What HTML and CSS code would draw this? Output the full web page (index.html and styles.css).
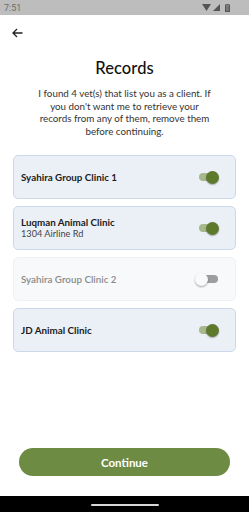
FILE: index.html
```html
<!DOCTYPE html>
<html>
<head>
<meta charset="utf-8">
<link rel="stylesheet" href="styles.css">
</head>
<body>
<div class="screen">
  <div class="status">
    <span class="time">7:51</span>
    <div class="status-icons">
      <svg width="9" height="7" viewBox="0 0 9 7"><path d="M0 0 H9 L4.5 7 Z" fill="#555"/></svg>
      <svg width="7" height="7" viewBox="0 0 7 7"><path d="M0 7 L7 0 V7 Z" fill="#555"/></svg>
      <svg width="5" height="8" viewBox="0 0 5 8"><rect x="0.5" y="1" width="4" height="6.5" fill="none" stroke="#555" stroke-width="1"/><rect x="1.5" y="0" width="2" height="1" fill="#555"/><rect x="1" y="2" width="3" height="5" fill="#777"/></svg>
    </div>
  </div>
  <div class="topbar">
    <svg class="back" width="11" height="10" viewBox="0 0 11 10"><path d="M10.5 5 H1.2 M5 1 L1 5 L5 9" fill="none" stroke="#222" stroke-width="1.3"/></svg>
  </div>
  <h1 class="title">Records</h1>
  <p class="intro">I found 4 vet(s) that list you as a client. If you don't want me to retrieve your records from any of them, remove them before continuing.</p>
  <div class="list">
    <div class="card">
      <div class="card-text"><div class="name">Syahira Group Clinic 1</div></div>
      <div class="toggle on"><span class="track"></span><span class="thumb"></span></div>
    </div>
    <div class="card">
      <div class="card-text"><div class="name">Luqman Animal Clinic</div><div class="addr">1304 Airline Rd</div></div>
      <div class="toggle on"><span class="track"></span><span class="thumb"></span></div>
    </div>
    <div class="card off">
      <div class="card-text"><div class="name">Syahira Group Clinic 2</div></div>
      <div class="toggle"><span class="track"></span><span class="thumb"></span></div>
    </div>
    <div class="card">
      <div class="card-text"><div class="name">JD Animal Clinic</div></div>
      <div class="toggle on"><span class="track"></span><span class="thumb"></span></div>
    </div>
  </div>
  <div class="spacer"></div>
  <div class="actions">
    <button class="continue">Continue</button>
  </div>
  <div class="navbar"><span class="pill"></span></div>
</div>
</body>
</html>
```
FILE: styles.css
```css
* { box-sizing: border-box; }
html, body { margin: 0; padding: 0; background: #fff; }
body { font-family: Lato, "Noto Sans", sans-serif; }
.screen { width: 249px; height: 512px; display: flex; flex-direction: column; overflow: hidden; }
.status { height: 15px; background: #bdbdbd; display: flex; align-items: center; justify-content: space-between; padding: 0 19px 0 4px; }
.time { font-family: Roboto, sans-serif; font-size: 9px; color: #6a6a6a; }
.status-icons { display: flex; align-items: center; gap: 2px; }
.status-icons svg:last-child { margin-left: 3px; }
.topbar { height: 35px; display: flex; align-items: center; padding-left: 12px; padding-top: 1px; }
.back { display: block; }
.title { margin: 8px 0 0; text-align: center; font-size: 16.5px; font-weight: 500; color: #111; line-height: 20px; letter-spacing: 0.1px; }
.intro { margin: 9px 0 0; padding: 0 35px; text-align: center; font-size: 9.8px; line-height: 12.6px; color: #333; }
.list { margin-top: 18px; padding: 0 13px; display: flex; flex-direction: column; gap: 7px; }
.card { height: 44px; background: #ebf0f7; border: 1px solid #cbd8ea; border-radius: 5px; display: flex; align-items: center; justify-content: space-between; padding: 0 16px 0 7px; }
.card.off { background: #f8f9fb; border-color: #eef1f6; }
.name { font-size: 9.8px; font-weight: 700; color: #1c1c1c; line-height: 12px; }
.addr { font-size: 9.2px; color: #444; line-height: 12px; }
.card.off .name { color: #8a8a8a; font-weight: 600; }
.toggle { position: relative; width: 22px; height: 13px; }
.track { position: absolute; left: 2px; right: 1px; top: 2.5px; height: 8px; border-radius: 4px; background: #a7b88c; }
.thumb { position: absolute; right: 0; top: 0; width: 13px; height: 13px; border-radius: 50%; background: #5d7a2c; box-shadow: 0 1px 1.5px rgba(0,0,0,0.3); }
.toggle:not(.on) .track { background: #9e9e9e; }
.toggle:not(.on) .thumb { left: -2px; right: auto; background: #fafafa; box-shadow: 0 1px 2px rgba(0,0,0,0.35); }
.spacer { flex: 1; }
.actions { padding: 0 19px 20px; }
.continue { width: 100%; height: 28px; border: none; border-radius: 14px; background: #6e8b43; color: #fff; font-family: Lato, "Noto Sans", sans-serif; font-size: 11.5px; font-weight: 700; padding: 0; }
.navbar { height: 16px; background: #000; display: flex; justify-content: center; align-items: center; }
.pill { width: 68px; height: 2px; border-radius: 1px; background: #d8d8d8; margin-top: 1px; }
```
